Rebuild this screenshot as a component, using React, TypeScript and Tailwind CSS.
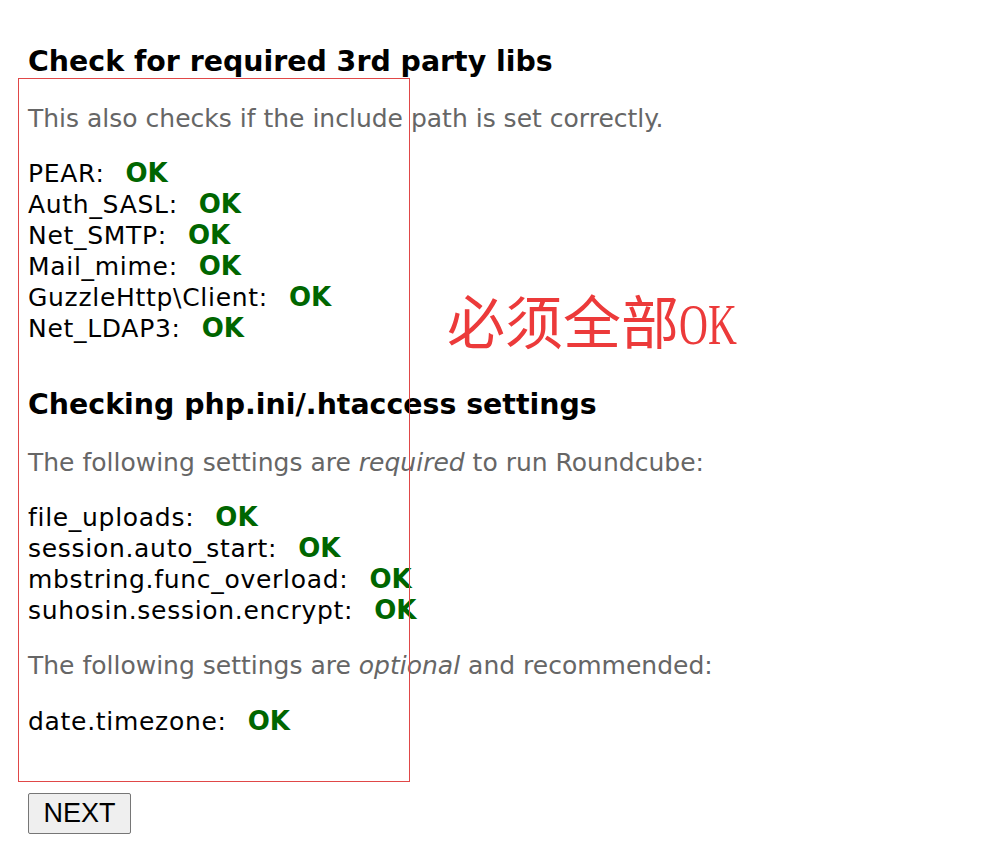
const libs = ["PEAR", "Auth_SASL", "Net_SMTP", "Mail_mime", "GuzzleHttp\\Client", "Net_LDAP3"];
const required = ["file_uploads", "session.auto_start", "mbstring.func_overload", "suhosin.session.encrypt"];

const Row = ({ name }: { name: string }) => (
  <div className="h-[31px] leading-[31px] text-black">
    <span className="tracking-[0.7px]">{name}:</span>
    <span className="ml-[21px] text-[26px] font-bold text-[#006600]">OK</span>
  </div>
);

export default function App() {
  return (
    <div className="relative min-h-screen bg-white pl-[28px] pt-[44px] text-[25px] font-['DejaVu_Sans',sans-serif]">
      <h2 className="h-[36px] text-[28.4px] font-bold leading-[36px] text-black">
        Check for required 3rd party libs
      </h2>
      <p className="mt-[23px] leading-[31px] text-[#666666]">
        This also checks if the include path is set correctly.
      </p>
      <div className="mt-[23.5px]">
        {libs.map((l) => (
          <Row key={l} name={l} />
        ))}
      </div>

      <h2 className="mt-[43.5px] h-[36px] text-[28.4px] font-bold leading-[36px] text-black">
        Checking php.ini/.htaccess settings
      </h2>
      <p className="mt-[23.5px] leading-[31px] text-[#666666]">
        The following settings are <em>required</em> to run Roundcube:
      </p>
      <div className="mt-[24px]">
        {required.map((l) => (
          <Row key={l} name={l} />
        ))}
      </div>
      <p className="mt-[24px] leading-[31px] text-[#666666]">
        The following settings are <em>optional</em> and recommended:
      </p>
      <div className="mt-[25px]">
        <Row name="date.timezone" />
      </div>

      <button className="mt-[56.5px] h-[41px] w-[103px] rounded-[2px] border border-[#767676] bg-[#efefef] font-['Liberation_Sans',sans-serif] text-[27px] leading-none text-black">
        NEXT
      </button>

      {/* annotation overlay */}
      <div className="pointer-events-none absolute left-[18px] top-[78px] h-[704px] w-[392px] border border-[#e04848]" />
      <div className="absolute left-[447px] top-[293px] flex items-center font-['Liberation_Serif','Noto_Sans_CJK_SC',serif] text-[58px] leading-[64px] text-[#ec3a3a]">
        <span>必须全部</span>
        <span className="inline-block origin-left scale-x-[0.69]">OK</span>
      </div>
    </div>
  );
}
